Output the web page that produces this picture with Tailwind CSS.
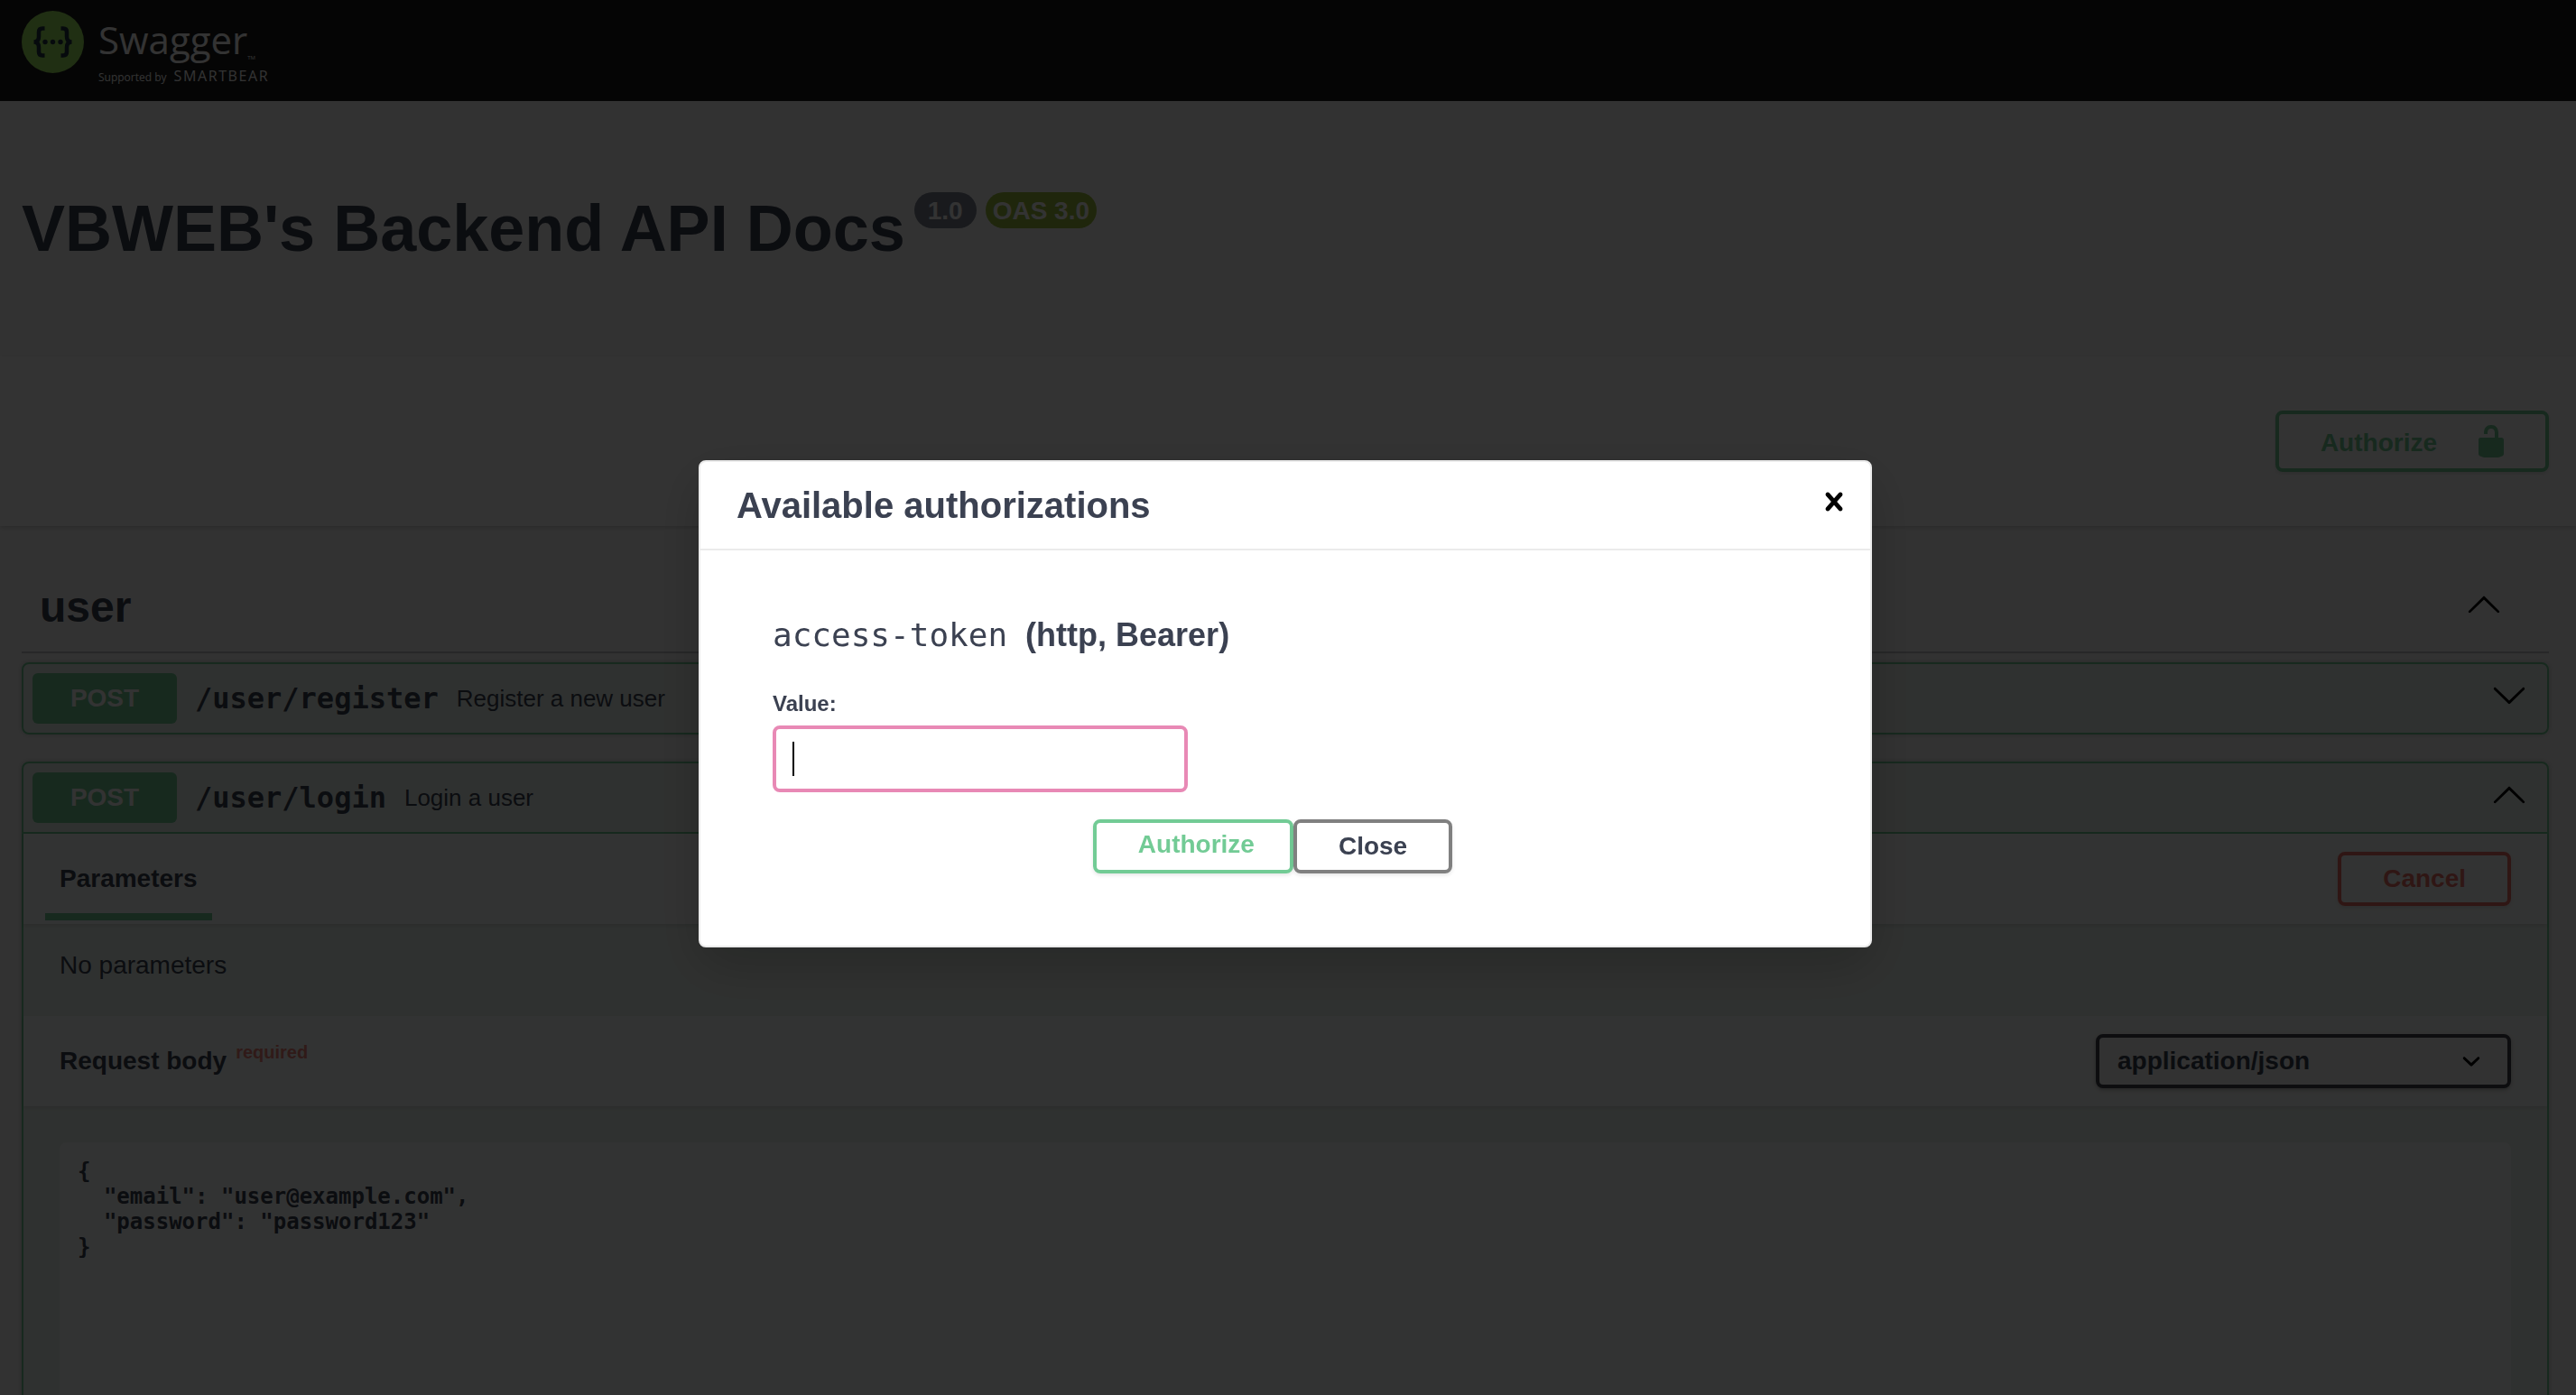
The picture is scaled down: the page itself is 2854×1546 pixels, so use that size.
<!DOCTYPE html>
<html lang="en">
<head>
<meta charset="utf-8">
<meta name="viewport" content="width=device-width, initial-scale=1">
<title>Swagger UI</title>
<script src="https://cdn.jsdelivr.net/npm/@tailwindcss/browser@4"></script>
</head>
<body class="flex h-screen flex-col overflow-hidden bg-[#fafafa] font-['Liberation_Sans',Arial,sans-serif] text-[28px] leading-8 text-[#3b4151]">

<svg class="hidden" aria-hidden="true">
  <symbol id="arrow-up" viewBox="0 0 20 20"><path d="M17.418 14.908c.272.268.709.268.979 0s.271-.701 0-.969l-7.908-7.831c-.27-.268-.707-.268-.979 0l-7.908 7.831c-.27.268-.27.701 0 .969.271.268.709.268.979 0L10 7.767l7.418 7.141z"/></symbol>
  <symbol id="arrow-down" viewBox="0 0 20 20"><path d="M17.418 6.109c.272-.268.709-.268.979 0s.271.701 0 .969l-7.908 7.83c-.27.268-.707.268-.979 0l-7.908-7.83c-.27-.268-.271-.701 0-.969.271-.268.709-.268.979 0L10 13.25l7.418-7.141z"/></symbol>
</svg>

<header class="h-28 shrink-0 bg-[#1b1b1b] px-6 pt-3">
  <a href="#" class="flex w-fit gap-4 text-white" aria-label="Swagger, supported by SmartBear">
    <svg class="size-[69px] shrink-0" viewBox="0 0 69 69">
      <circle cx="34.5" cy="34.5" r="34.5" fill="#a0e85f"/>
      <g fill="none" stroke="#203442" stroke-width="4.5">
        <path d="M25.5 19.500h-2.500q-4 0-4 4v5q0 6-5.500 6q5.500 0 5.500 6v5q0 4 4 4h2.500"/>
        <path d="M43.500 19.500h2.500q4 0 4 4v5q0 6 5.500 6q-5.500 0-5.500 6v5q0 4-4 4h-2.500"/>
      </g>
      <g fill="#203442"><circle cx="26" cy="34.5" r="2.700"/><circle cx="34.500" cy="34.500" r="2.700"/><circle cx="43" cy="34.500" r="2.700"/></g>
    </svg>
    <span class="flex flex-col font-['Open_Sans',sans-serif]">
      <span class="flex items-end text-[42px] leading-[64px]">Swagger<span class="pb-1 text-[6px] leading-4">TM</span></span>
      <span class="flex items-baseline gap-2 text-xs leading-4">Supported by <span class="text-base leading-4 font-medium tracking-widest">SMARTBEAR</span></span>
    </span>
  </a>
</header>

<main class="min-h-0 flex-1 overflow-hidden pr-[6px]">
  <div class="flex items-start px-6 pt-[100px] pb-[101px]">
    <h1 class="text-[72px] leading-[82px] font-bold">VBWEB's Backend API Docs</h1>
    <span class="mt-px ml-2.5 flex h-10 items-center rounded-full bg-[#7d8492] px-[15px] pt-0.5 font-bold text-white">1.0</span>
    <span class="mt-px ml-2.5 flex h-10 items-center rounded-full bg-[#9abd3c] px-2 pt-0.5 font-bold text-white">OAS 3.0</span>
  </div>

  <div class="-mr-[6px] flex justify-end bg-white py-[60px] pr-[30px] shadow-[0_2px_4px_rgba(0,0,0,0.15)]">
    <button class="flex h-[68px] items-center gap-10 rounded-lg border-4 border-[#72cb95] pr-10 pl-[46px] font-bold text-[#72cb95] shadow-[0_2px_4px_rgba(0,0,0,0.1)]">
      <span class="pt-1">Authorize</span>
      <svg class="size-10" viewBox="0 0 20 20" fill="currentColor"><path d="M15.8 8H14V5.600C14 2.703 12.665 1 10 1 7.334 1 6 2.703 6 5.600V6h2v-.801C8 3.754 8.797 3 10 3c1.203 0 2 .754 2 2.199V8H4c-.553 0-1 .646-1 1.199V17c0 .549.428 1.139.951 1.307l1.197.387C5.672 18.861 6.550 19 7.100 19h5.800c.549 0 1.428-.139 1.951-.307l1.196-.387c.524-.167.953-.757.953-1.306V9.199C17 8.646 16.352 8 15.800 8z"/></svg>
    </button>
  </div>

  <section class="mt-10 px-6">
    <div class="flex h-[101px] items-center justify-between border-b-2 border-[#3b4151]/30 pr-[52px] pl-5">
      <h2 class="text-[48px] leading-[56px] font-bold">user</h2>
      <button aria-label="Collapse user" class="mb-2 text-black"><svg class="size-10" fill="currentColor"><use href="#arrow-up"/></svg></button>
    </div>

    <article class="mt-2.5 rounded-lg border-2 border-[#72cb95] bg-[#72cb95]/10 shadow-[0_0_6px_rgba(0,0,0,0.19)]">
      <div class="flex h-[76px] items-center gap-5 pr-[22px] pl-2.5">
        <span class="w-40 rounded-md bg-[#72cb95] text-center leading-[56px] font-bold text-white">POST</span>
        <a href="#register" class="font-['DejaVu_Sans_Mono',monospace] text-[32px] font-bold">/user/register</a>
        <span class="flex-1 text-[26px]">Register a new user</span>
        <button aria-label="Expand register" class="mb-2 text-black"><svg class="size-10" fill="currentColor"><use href="#arrow-down"/></svg></button>
      </div>
    </article>

    <article class="mt-[30px] rounded-lg border-2 border-[#72cb95] bg-[#72cb95]/10 shadow-[0_0_6px_rgba(0,0,0,0.19)]">
      <div class="flex h-[78px] items-center gap-5 border-b-2 border-[#72cb95] pr-[22px] pl-2.5">
        <span class="w-40 rounded-md bg-[#72cb95] text-center leading-[56px] font-bold text-white">POST</span>
        <a href="#login" class="font-['DejaVu_Sans_Mono',monospace] text-[32px] font-bold">/user/login</a>
        <span class="flex-1 text-[26px]">Login a user</span>
        <button aria-label="Collapse login" class="mb-2 text-black"><svg class="size-10" fill="currentColor"><use href="#arrow-up"/></svg></button>
      </div>

      <div class="flex h-[100px] items-center justify-between bg-white/80 pr-10 pl-6 shadow-[0_2px_4px_rgba(0,0,0,0.1)]">
        <h3 class="flex h-24 items-center self-start border-b-8 border-[#72cb95] px-4 pt-3 font-bold">Parameters</h3>
        <button class="h-[60px] rounded-lg border-4 border-[#ec6f66] px-[46px] font-bold text-[#ec6f66] shadow-[0_2px_4px_rgba(0,0,0,0.1)]">Cancel</button>
      </div>
      <p class="px-10 pt-[30px] pb-10">No parameters</p>

      <div class="flex h-[100px] items-center justify-between bg-white/80 px-10 shadow-[0_2px_4px_rgba(0,0,0,0.1)]">
        <h3 class="flex items-center gap-2.5 font-bold">Request body <span class="pb-5 text-xl text-[#eb5f55]/80">required</span></h3>
        <div class="relative">
          <select aria-label="Request content type" class="h-[60px] w-[460px] appearance-none rounded-lg border-4 border-[#41444e] bg-[#f7f7f7] pl-5 font-bold shadow-[0_2px_4px_rgba(0,0,0,0.25)]">
            <option>application/json</option>
          </select>
          <svg class="pointer-events-none absolute top-2.5 right-6 size-10" viewBox="0 0 20 20" fill="#000"><path d="M13.418 7.859c.271-.268.709-.268.978 0s.270.701 0 .969l-3.908 3.830c-.270.268-.707.268-.979 0l-3.908-3.830c-.270-.267-.270-.701 0-.969.271-.268.709-.268.978 0L10 11l3.418-3.141z"/></svg>
        </div>
      </div>

      <div class="p-10">
        <textarea aria-label="Request body" spellcheck="false" class="block h-[560px] w-full resize-none rounded-lg bg-white/80 px-5 pt-[18px] font-['DejaVu_Sans_Mono',monospace] text-2xl leading-7 font-bold">{
  "email": "user@example.com",
  "password": "password123"
}</textarea>
      </div>
    </article>
  </section>
</main>

<div class="fixed inset-0 flex items-center justify-center bg-black/80 pt-[14px] pr-[6px]">
  <div role="dialog" aria-modal="true" aria-labelledby="auth-title" class="w-full max-w-[1300px] rounded-lg border-2 border-[#ebebeb] bg-white shadow-[0_20px_60px_rgba(0,0,0,0.2)]">
    <div class="flex h-[98px] items-center justify-between border-b-2 border-[#ebebeb] pr-5 pl-10">
      <h2 id="auth-title" class="text-[40px] leading-[48px] font-bold">Available authorizations</h2>
      <button aria-label="Close dialog" class="mb-2 text-black"><svg class="size-10" viewBox="0 0 20 20" fill="currentColor"><path d="M14.348 14.849c-.469.469-1.229.469-1.697 0L10 11.819l-2.651 3.029c-.469.469-1.229.469-1.697 0-.469-.469-.469-1.229 0-1.697l2.758-3.150-2.759-3.152c-.469-.469-.469-1.228 0-1.697.469-.469 1.228-.469 1.697 0L10 8.183l2.651-3.031c.469-.469 1.228-.469 1.697 0 .469.469.469 1.229 0 1.697l-2.758 3.152 2.758 3.150c.469.469.469 1.229 0 1.698z"/></svg></button>
    </div>
    <form class="px-20 pt-[72px] pb-20">
      <h3 class="flex items-baseline gap-5 text-[36px] leading-[44px] font-bold"><code class="font-['DejaVu_Sans_Mono',monospace] text-[36px] font-normal">access-token</code>(http, Bearer)</h3>
      <label for="token" class="mt-10 block w-fit text-2xl leading-7 font-bold">Value:</label>
      <div class="relative mt-2.5 w-[460px]">
        <input id="token" type="text" class="block h-[74px] w-full rounded-lg border-4 border-[#e889b5] bg-white px-5 caret-transparent outline-none">
        <span class="absolute top-[18px] left-[22px] h-[38px] w-0.5 bg-black"></span>
      </div>
      <div class="mt-[30px] flex justify-center pr-7">
        <button type="button" class="h-[60px] rounded-lg border-4 border-[#72cb95] pr-[39px] pb-1 pl-[46px] font-bold text-[#72cb95] shadow-[0_2px_4px_rgba(0,0,0,0.1)]">Authorize</button>
        <button type="button" class="h-[60px] rounded-lg border-4 border-[#808080] px-[46px] font-bold shadow-[0_2px_4px_rgba(0,0,0,0.1)]">Close</button>
      </div>
    </form>
  </div>
</div>
</body>
</html>
